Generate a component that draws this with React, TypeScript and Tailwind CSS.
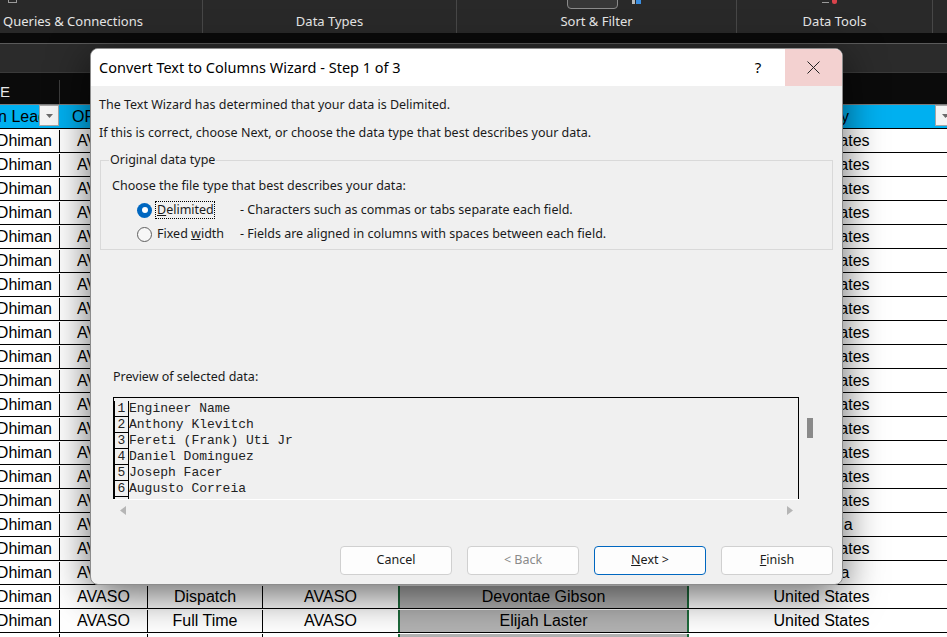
import React from "react";

type Row = {
  lead: string;
  op: string;
  kind: string;
  owner: string;
  name: string;
  country: string;
};

const names = [
  "Anthony Klevitch",
  "Fereti (Frank) Uti Jr",
  "Daniel Dominguez",
  "Joseph Facer",
  "Augusto Correia",
  "Marcus Bell",
  "Tyler Hughes",
  "Ryan Mitchell",
  "Kevin Ortiz",
  "Brandon Lee",
  "Samuel Price",
  "Jason Ward",
  "Eric Foster",
  "Adam Brooks",
  "Chris Moreno",
  "Luke Daniels",
  "Noah Patel",
  "Jordan Hayes",
  "Ian Cooper",
];

const countries = [
  ...Array(16).fill("United States"),
  "Australia",
  "United States",
  "Canada",
  "United States",
  "United States",
  "United States",
];

const rows: Row[] = countries.map((country, i) => ({
  lead: "Dhiman",
  op: "AVASO",
  kind: i === 20 ? "Full Time" : "Dispatch",
  owner: "AVASO",
  name: i === 19 ? "Devontae Gibson" : i === 20 ? "Elijah Laster" : names[i % names.length],
  country,
}));

const preview = [
  "Engineer Name",
  "Anthony Klevitch",
  "Fereti (Frank) Uti Jr",
  "Daniel Dominguez",
  "Joseph Facer",
  "Augusto Correia",
  "",
];

const FilterButton = () => (
  <div className="w-[20px] h-[21px] bg-[#f4f4f4] border border-[#a6a6a6] flex items-center justify-center">
    <svg width="9" height="6" viewBox="0 0 9 6">
      <path d="M1 1 L8 1 L4.5 5 Z" fill="#6b6b6b" />
    </svg>
  </div>
);

const Ribbon = () => (
  <div className="h-[33px] bg-[#292929] flex text-[#e6e6e6] text-[13px] relative">
    <div className="w-[203px] shrink-0 flex items-end pb-[2px] pl-[3px] border-r border-[#474747] relative">
      <span>Queries &amp; Connections</span>
      <div className="absolute left-[8px] top-0 w-[9px] h-[3px] border-x border-b border-[#9a9a9a]" />
    </div>
    <div className="w-[254px] shrink-0 flex items-end justify-center pb-[2px] border-r border-[#474747]">
      Data Types
    </div>
    <div className="w-[280px] shrink-0 flex items-end justify-center pb-[2px] border-r border-[#474747] relative">
      <div className="absolute left-[110px] top-[-6px] w-[51px] h-[15px] rounded-[4px] bg-[#373737] border border-[#8a8a8a]" />
      <div className="absolute left-[175px] top-0 w-[3px] h-[4px] bg-[#b9b9b9]" />
      <div className="absolute left-[179px] top-0 w-[5px] h-[4px] bg-[#3b8ee0]" />
      <span>Sort &amp; Filter</span>
    </div>
    <div className="w-[196px] shrink-0 flex items-end justify-center pb-[2px] border-r border-[#474747] relative">
      <div className="absolute left-[85px] top-0 w-[7px] h-[3px] border-b border-[#9a9a9a]" />
      <div className="absolute left-[95px] top-0 w-[5px] h-[4px] rounded-b-full bg-[#d9434b]" />
      <span>Data Tools</span>
    </div>
    <div className="flex-1" />
  </div>
);

const Sheet = () => (
  <div className="font-['Liberation_Sans',Arial,sans-serif] text-[16px] text-black">
    <div className="h-[31px] bg-[#0b0b0b] flex pt-[7px]">
      <div className="w-[60px] shrink-0 border-r border-[#3c3c3c] text-[#e8e8e8] flex items-center text-[15px]">
        E
      </div>
      <div className="flex-1" />
    </div>
    <div className="h-[1px] bg-[#7b7b7b]" />
    <div className="h-[24px] bg-[#00b0f0] border-b border-black flex">
      <div className="w-[60px] shrink-0 relative overflow-hidden flex items-center">
        <span className="absolute right-[13px] whitespace-nowrap">n Lead</span>
        <div className="absolute left-[39px] top-0">
          <FilterButton />
        </div>
      </div>
      <div className="w-[88px] shrink-0 flex items-center pl-[12px]">OPCO</div>
      <div className="flex-1" />
      <div className="w-[258px] shrink-0 relative">
        <span className="absolute left-[104px] top-0 leading-[23px] whitespace-nowrap">
          Country
        </span>
        <div className="absolute left-[246px] top-0">
          <FilterButton />
        </div>
      </div>
    </div>
    {rows.map((r, i) => (
      <div key={i} className="h-[24px] flex border-b border-black bg-white pt-[1px]">
        <div className="w-[60px] shrink-0 border-r border-black relative overflow-hidden flex items-center">
          <span className="absolute right-[7px] whitespace-nowrap">{r.lead}</span>
        </div>
        <div className="w-[88px] shrink-0 border-r border-black flex items-center justify-center">
          {r.op}
        </div>
        <div className="w-[115px] shrink-0 border-r border-black flex items-center justify-center">
          {r.kind}
        </div>
        <div className="w-[135px] shrink-0 flex items-center justify-center">{r.owner}</div>
        <div className="w-[291px] shrink-0 border-x-2 border-[#1e6b3c] bg-[#b2b2b2] flex items-center justify-center">
          {r.name}
        </div>
        <div className="w-[265px] shrink-0 flex items-center justify-center">{r.country}</div>
      </div>
    ))}
  </div>
);

const Radio = ({ checked }: { checked: boolean }) =>
  checked ? (
    <div className="w-[15px] h-[15px] shrink-0 rounded-full bg-[#0067c0] flex items-center justify-center">
      <div className="w-[6px] h-[6px] rounded-full bg-white" />
    </div>
  ) : (
    <div className="w-[15px] h-[15px] shrink-0 rounded-full border border-[#5f5f5f] bg-[#f7f7f7]" />
  );

const Button = ({
  label,
  underline,
  disabled,
  primary,
}: {
  label: string;
  underline?: number;
  disabled?: boolean;
  primary?: boolean;
}) => (
  <div
    className={
      "w-[112px] h-[29px] rounded-[4px] bg-[#fdfdfd] flex items-center justify-center border " +
      (primary ? "border-[#0067c0]" : "border-[#d0d0d0]") +
      (disabled ? " text-[#8a8a8a]" : " text-[#1b1b1b]")
    }
  >
    {underline === undefined ? (
      label
    ) : (
      <span>
        {label.slice(0, underline)}
        <span className="underline">{label[underline]}</span>
        {label.slice(underline + 1)}
      </span>
    )}
  </div>
);

const Wizard = () => (
  <div className="absolute left-[90px] top-[48px] w-[753px] h-[537px] rounded-[8px] overflow-hidden bg-[#f0f0f0] shadow-[0_10px_40px_rgba(0,0,0,0.6)] border border-[#8c8c8c] flex flex-col font-['Noto_Sans',Arial,sans-serif] text-[12.5px] text-[#1a1a1a]">
    <div className="h-[37px] bg-white flex items-center shrink-0">
      <div className="flex-1 pl-[8px] text-[14.5px] text-black">
        Convert Text to Columns Wizard - Step 1 of 3
      </div>
      <div className="w-[40px] text-[15px] text-black text-center mr-[7px]">?</div>
      <div className="w-[57px] h-[37px] bg-[#f3d1d0] flex items-center justify-center">
        <svg width="13" height="13" viewBox="0 0 13 13">
          <path d="M0.5 0.5 L12.5 12.5 M12.5 0.5 L0.5 12.5" stroke="#222" strokeWidth="1" />
        </svg>
      </div>
    </div>
    <div className="pl-[8px] pt-[11px] leading-[16px]">
      The Text Wizard has determined that your data is Delimited.
    </div>
    <div className="pl-[8px] mt-[12px] leading-[16px]">
      If this is correct, choose Next, or choose the data type that best describes your data.
    </div>
    <fieldset className="mx-[9px] mt-[11px] border border-[#d9d9d9] px-[8px] pb-[8px] h-[98px]">
      <legend className="px-[1px] leading-[16px]">Original data type</legend>
      <div className="pl-[3px] mt-[10px] leading-[16px]">
        Choose the file type that best describes your data:
      </div>
      <div className="flex items-center h-[24px] mt-[4px] pl-[28px] whitespace-nowrap">
        <Radio checked />
        <div className="ml-[3px] w-[60px] shrink-0 h-[18px] border border-dotted border-black flex items-center pl-[1px]">
          <span>
            <span className="underline">D</span>elimited
          </span>
        </div>
        <div className="ml-[25px]">- Characters such as commas or tabs separate each field.</div>
      </div>
      <div className="flex items-center h-[24px] pl-[28px] whitespace-nowrap">
        <Radio checked={false} />
        <div className="ml-[4px] w-[59px] shrink-0 pl-[1px]">
          Fixed <span className="underline">w</span>idth
        </div>
        <div className="ml-[25px]">- Fields are aligned in columns with spaces between each field.</div>
      </div>
    </fieldset>
    <div className="pl-[22px] mt-[119px] leading-[16px]">Preview of selected data:</div>
    <div className="relative ml-[22px] mt-[12px] w-[700px] h-[103px]">
      <div className="w-[686px] h-[103px] overflow-hidden border-x border-t border-black pt-[3px] font-['Liberation_Mono','Courier_New',monospace] text-[13px] text-[#222]">
        {preview.map((line, i) => (
          <div key={i} className="flex h-[16px] leading-[16px]">
            <div className="w-[15px] shrink-0 border-x border-b border-black text-center leading-[15px]">
              {line ? i + 1 : ""}
            </div>
            <div className="whitespace-pre">{line}</div>
          </div>
        ))}
      </div>
      <div className="absolute left-0 w-[686px] bottom-0 h-[1px] bg-white" />
      <div className="absolute left-[694px] top-[21px] w-[6px] h-[20px] bg-[#8a8a8a]" />
    </div>
    <div className="ml-[22px] w-[686px] h-[20px] flex items-center justify-between pl-[7px] pr-[6px]">
      <svg width="6" height="9" viewBox="0 0 6 9">
        <path d="M6 0 L0 4.5 L6 9 Z" fill="#b5b5b5" />
      </svg>
      <svg width="6" height="9" viewBox="0 0 6 9">
        <path d="M0 0 L6 4.5 L0 9 Z" fill="#b5b5b5" />
      </svg>
    </div>
    <div className="mt-auto mb-[9px] flex justify-end gap-[15px] pr-[9px]">
      <Button label="Cancel" />
      <Button label="< Back" disabled />
      <Button label="Next >" underline={0} primary />
      <Button label="Finish" underline={0} />
    </div>
  </div>
);

export default function App() {
  return (
    <div className="w-[947px] h-[637px] overflow-hidden relative bg-[#0b0b0b]">
      <Ribbon />
      <div className="h-[10px] bg-[#0a0a0a]" />
      <div className="h-[1px] bg-[#5a5a5a]" />
      <div className="h-[29px] bg-[#2b2b2b] border-b border-[#3a3a3a]" />
      <Sheet />
      <Wizard />
    </div>
  );
}
